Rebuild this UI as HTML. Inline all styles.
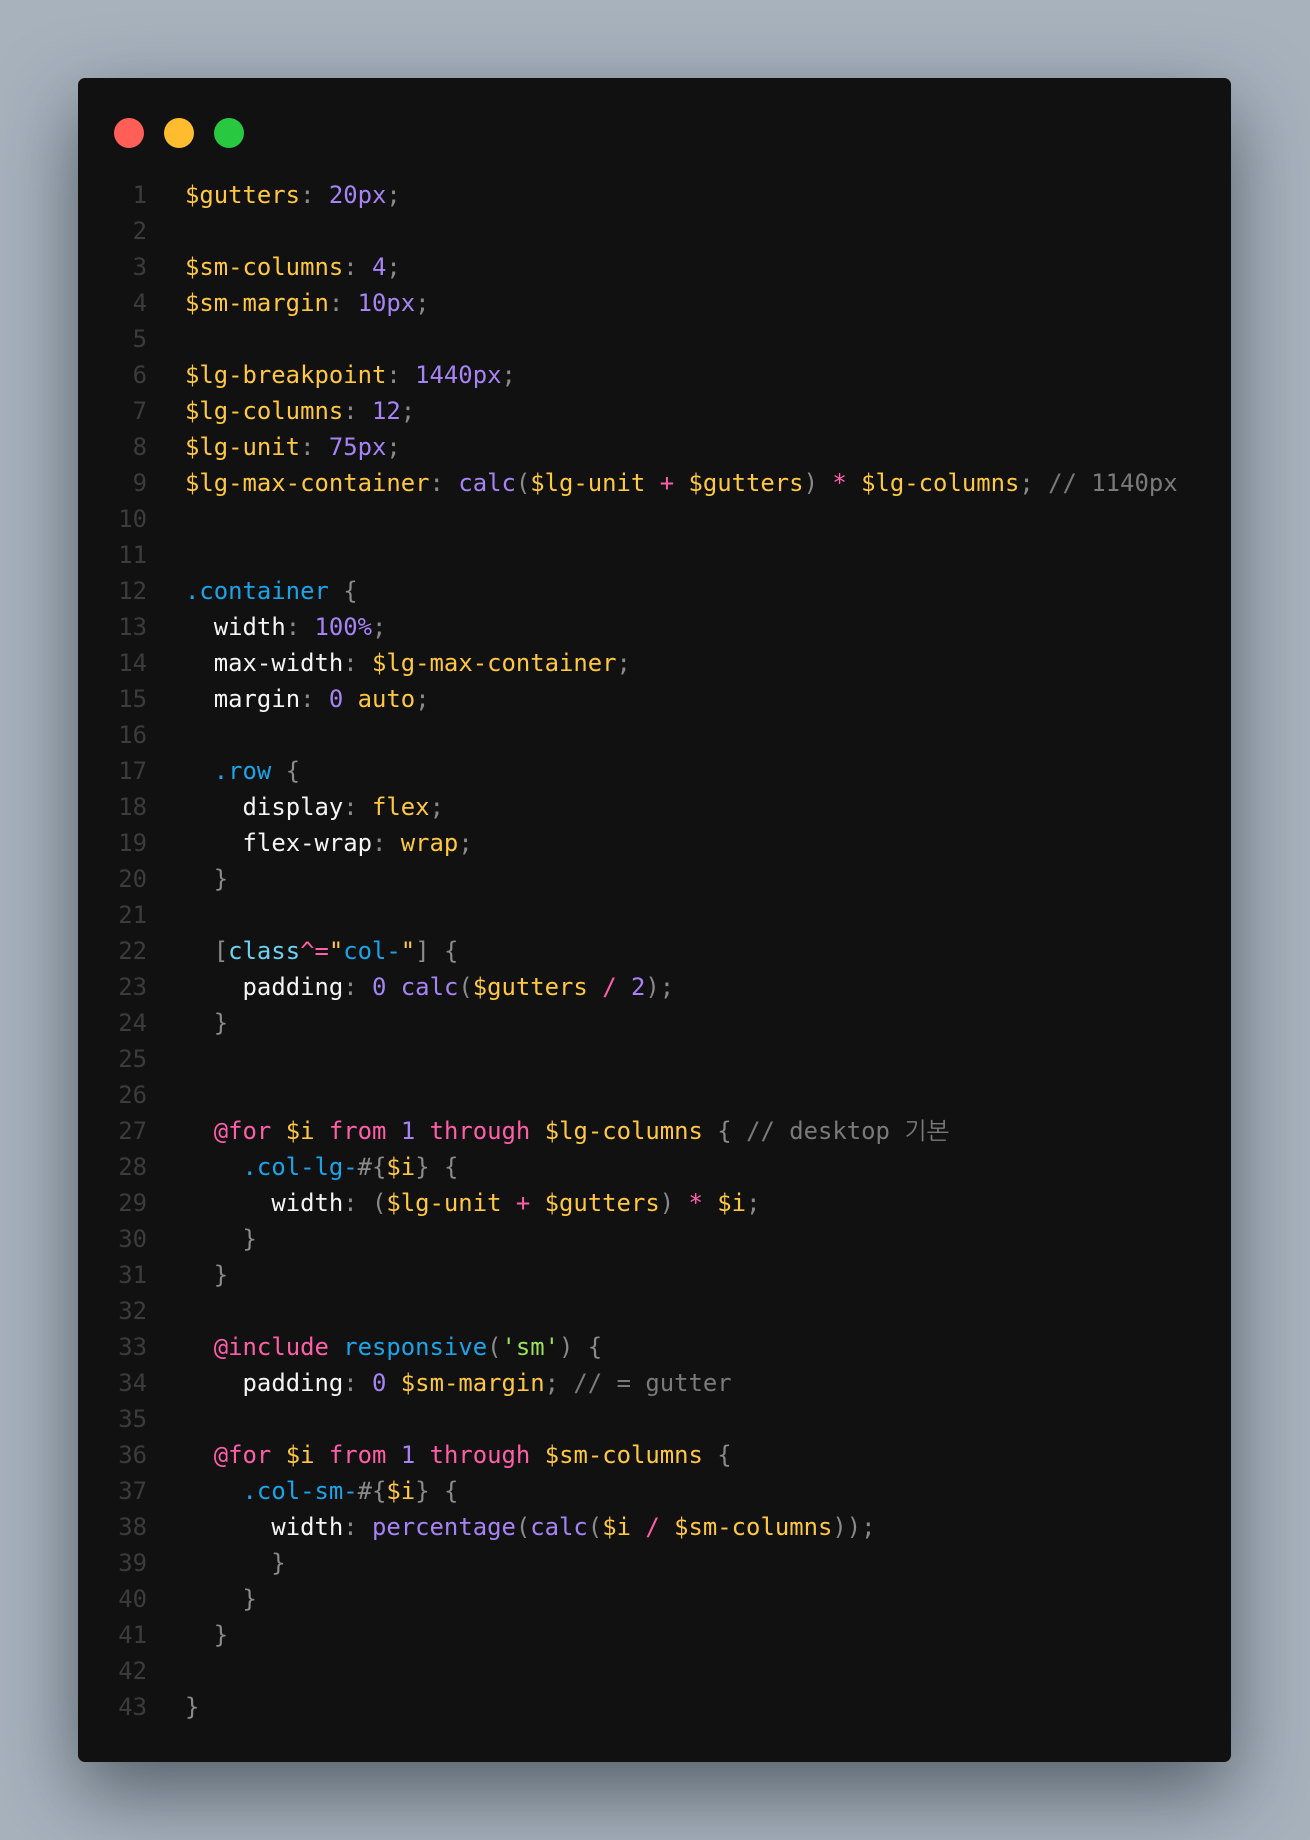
<!DOCTYPE html>
<html><head><meta charset="utf-8"><style>
html,body{margin:0;padding:0}
body{width:1310px;height:1840px;background:#a7b2bd;position:relative;overflow:hidden}
.win{position:absolute;left:78px;top:78px;width:1153px;height:1684px;background:#111111;border-radius:7px;box-shadow:0 30px 80px rgba(30,40,50,0.6)}
.dot{position:absolute;top:118px;width:30px;height:30px;border-radius:50%}
pre{position:absolute;margin:0;top:177px;font-family:"DejaVu Sans Mono","NanumGothic",monospace;font-size:23.9px;line-height:36px;white-space:pre}
.ln{left:107px;width:40px;text-align:right;color:#3c3c3c}
.code{left:185px;color:#8a8a8a}
.y{color:#ffc842}.p{color:#a784f5}.w{color:#f5f5f5}.b{color:#1ba4ea}.k{color:#ff5fa8}.c{color:#7a7a7a}.l{color:#6cd3f2}.g{color:#9be35a}
</style></head><body>
<div class="win"></div>
<div class="dot" style="left:114px;background:#ff5f57"></div>
<div class="dot" style="left:164px;background:#febc2e"></div>
<div class="dot" style="left:214px;background:#28c840"></div>
<pre class="ln">1
2
3
4
5
6
7
8
9
10
11
12
13
14
15
16
17
18
19
20
21
22
23
24
25
26
27
28
29
30
31
32
33
34
35
36
37
38
39
40
41
42
43</pre>
<pre class="code"><span class="y">$gutters</span>: <span class="p">20px</span>;

<span class="y">$sm-columns</span>: <span class="p">4</span>;
<span class="y">$sm-margin</span>: <span class="p">10px</span>;

<span class="y">$lg-breakpoint</span>: <span class="p">1440px</span>;
<span class="y">$lg-columns</span>: <span class="p">12</span>;
<span class="y">$lg-unit</span>: <span class="p">75px</span>;
<span class="y">$lg-max-container</span>: <span class="p">calc</span>(<span class="y">$lg-unit</span> <span class="k">+</span> <span class="y">$gutters</span>) <span class="k">*</span> <span class="y">$lg-columns</span>; <span class="c">// 1140px</span>


<span class="b">.container</span> {
  <span class="w">width</span>: <span class="p">100%</span>;
  <span class="w">max-width</span>: <span class="y">$lg-max-container</span>;
  <span class="w">margin</span>: <span class="p">0</span> <span class="y">auto</span>;

  <span class="b">.row</span> {
    <span class="w">display</span>: <span class="y">flex</span>;
    <span class="w">flex-wrap</span>: <span class="y">wrap</span>;
  }

  [<span class="l">class</span><span class="k">^=</span><span class="y">"</span><span class="b">col-</span><span class="y">"</span>] {
    <span class="w">padding</span>: <span class="p">0</span> <span class="p">calc</span>(<span class="y">$gutters</span> <span class="k">/</span> <span class="p">2</span>);
  }


  <span class="k">@for</span> <span class="y">$i</span> <span class="k">from</span> <span class="p">1</span> <span class="k">through</span> <span class="y">$lg-columns</span> { <span class="c">// desktop 기본</span>
    <span class="b">.col-lg-</span>#{<span class="y">$i</span>} {
      <span class="w">width</span>: (<span class="y">$lg-unit</span> <span class="k">+</span> <span class="y">$gutters</span>) <span class="k">*</span> <span class="y">$i</span>;
    }
  }

  <span class="k">@include</span> <span class="b">responsive</span>(<span class="g">'sm'</span>) {
    <span class="w">padding</span>: <span class="p">0</span> <span class="y">$sm-margin</span>; <span class="c">// = gutter</span>

  <span class="k">@for</span> <span class="y">$i</span> <span class="k">from</span> <span class="p">1</span> <span class="k">through</span> <span class="y">$sm-columns</span> {
    <span class="b">.col-sm-</span>#{<span class="y">$i</span>} {
      <span class="w">width</span>: <span class="p">percentage</span>(<span class="p">calc</span>(<span class="y">$i</span> <span class="k">/</span> <span class="y">$sm-columns</span>));
      }
    }
  }

}</pre>
</body></html>
